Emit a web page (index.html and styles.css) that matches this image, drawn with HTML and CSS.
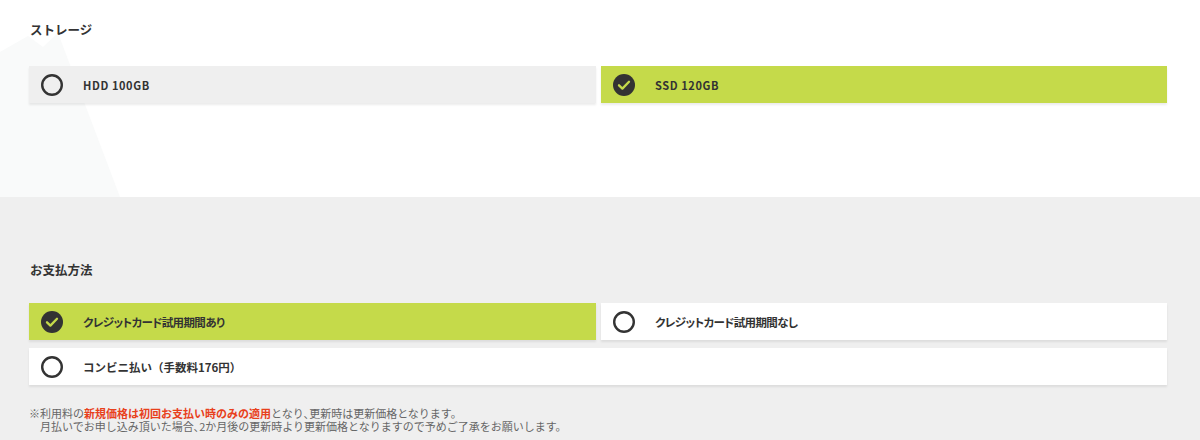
FILE: index.html
```html
<!DOCTYPE html>
<html lang="ja">
<head>
<meta charset="utf-8">
<link rel="stylesheet" href="styles.css">
</head>
<body>
<section class="storage">
  <svg class="mountain" width="200" height="197" viewBox="0 0 200 197"><polygon points="0,52 28,36 43,47 58,33 120,197 0,197" fill="#f9fafa"/></svg>
  <div class="inner">
    <h2 class="title">ストレージ</h2>
    <div class="options two">
      <div class="option">
        <svg class="icon" width="22" height="22" viewBox="0 0 22 22"><circle cx="11" cy="11" r="9.8" fill="none" stroke="#333" stroke-width="2.4"/></svg>
        <span class="label">HDD 100GB</span>
      </div>
      <div class="option selected">
        <svg class="icon" width="22" height="22" viewBox="0 0 22 22"><circle cx="11" cy="11" r="11" fill="#333"/><path d="M6 11.3 L9.4 14.6 L16 7.8" fill="none" stroke="#c5da4a" stroke-width="2.3" stroke-linecap="round" stroke-linejoin="round"/></svg>
        <span class="label">SSD 120GB</span>
      </div>
    </div>
  </div>
</section>
<section class="payment">
  <div class="inner">
    <h2 class="title">お支払方法</h2>
    <div class="options two pay">
      <div class="option selected">
        <svg class="icon" width="22" height="22" viewBox="0 0 22 22"><circle cx="11" cy="11" r="11" fill="#333"/><path d="M6 11.3 L9.4 14.6 L16 7.8" fill="none" stroke="#c5da4a" stroke-width="2.3" stroke-linecap="round" stroke-linejoin="round"/></svg>
        <span class="label jp kana">クレジットカード試用期間あり</span>
      </div>
      <div class="option white">
        <svg class="icon" width="22" height="22" viewBox="0 0 22 22"><circle cx="11" cy="11" r="9.8" fill="none" stroke="#333" stroke-width="2.4"/></svg>
        <span class="label jp kana">クレジットカード試用期間なし</span>
      </div>
      <div class="option white wide">
        <svg class="icon" width="22" height="22" viewBox="0 0 22 22"><circle cx="11" cy="11" r="9.8" fill="none" stroke="#333" stroke-width="2.4"/></svg>
        <span class="label jp">コンビニ払い（手数料176円）</span>
      </div>
    </div>
    <p class="note">※利用料の<strong>新規価格は初回お支払い時のみの適用</strong>となり､更新時は更新価格となります。<br><span class="indent">月払いでお申し込み頂いた場合､2か月後の更新時より更新価格となりますので予めご了承をお願いします。</span></p>
  </div>
</section>
</body>
</html>
```

FILE: styles.css
```css
* { box-sizing: border-box; }
body {
  margin: 0;
  font-family: "Noto Sans CJK JP", "Noto Sans", sans-serif;
  color: #333;
  background: #efefef;
}
.storage {
  position: relative;
  background: #fff;
  height: 197px;
  overflow: hidden;
}
.mountain {
  position: absolute;
  left: 0;
  top: 0;
}
.inner {
  position: relative;
  width: 1138px;
  margin-left: 29px;
}
.storage .inner { padding-top: 20px; }
.title {
  margin: 0 0 0 1px;
  font-size: 12.5px;
  line-height: 20px;
  font-weight: 700;
  letter-spacing: 0;
}
.options {
  display: grid;
  grid-template-columns: 567px 566px;
  column-gap: 5px;
  row-gap: 8px;
  margin-top: 26px;
}
.option {
  display: flex;
  align-items: center;
  height: 37px;
  padding-left: 12px;
  background: #efefef;
  box-shadow: 0 2px 2px rgba(0, 0, 0, 0.08);
}
.option.selected { background: #c5da4a; }
.option.white { background: #fff; }
.option.wide { grid-column: 1 / 3; }
.icon { flex: none; }
.label {
  margin-left: 20px;
  font-size: 11px;
  font-weight: 700;
  letter-spacing: 0.6px;
  color: #333;
}
.label.jp {
  font-size: 11.5px;
  letter-spacing: 0;
}
.label.kana {
  font-feature-settings: "palt";
  letter-spacing: -0.6px;
}
.payment .inner { padding-top: 63px; }
.payment .options { margin-top: 23px; }
.note {
  margin: 22px 0 0 0;
  font-size: 11px;
  line-height: 12.5px;
  color: #666;
  letter-spacing: 0;
}
.note strong {
  color: #e8401c;
  font-weight: 700;
}
.indent { padding-left: 11px; }
```
